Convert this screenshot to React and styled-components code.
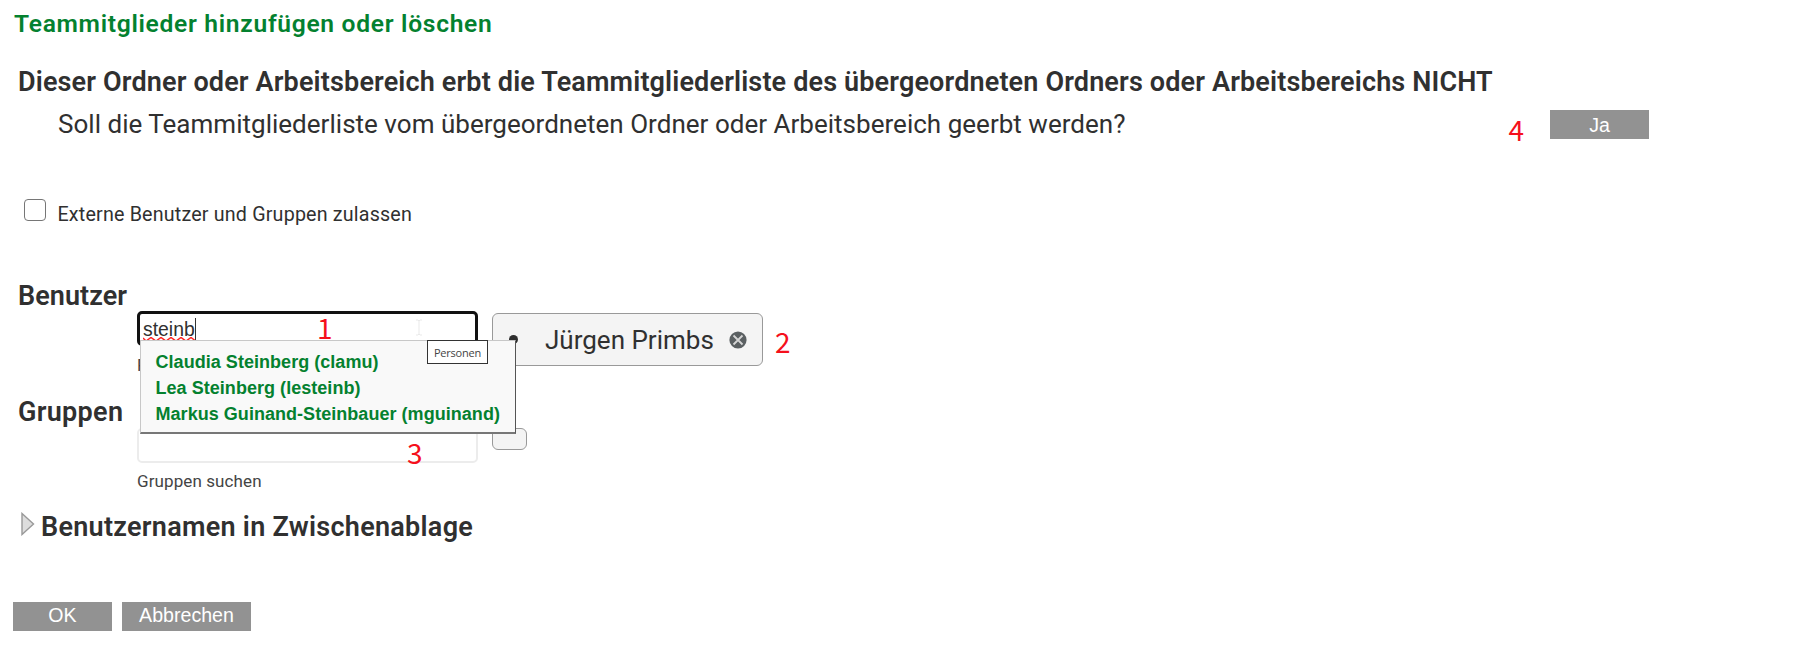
import React from "react";
import styled, { createGlobalStyle } from "styled-components";

const GlobalStyle = createGlobalStyle`
  * { box-sizing: border-box; }
  body {
    margin: 0;
    background: #fff;
    color: #303030;
    font-family: Roboto, "Liberation Sans", sans-serif;
  }
`;

const Page = styled.main`
  position: relative;
  height: 657px;
  padding: 9px 0 0 13px;
  overflow: hidden;
`;

const Title = styled.h1`
  margin: 0 0 0 1px;
  color: #04812f;
  font-size: 24.6px;
  font-weight: 600;
  line-height: 30px;
  letter-spacing: 0.7px;
  white-space: nowrap;
`;

const Heading = styled.h2`
  margin: 0;
  font-size: 27px;
  font-weight: 600;
  line-height: 30px;
  letter-spacing: ${(p) => p.$spacing || "0.15px"};
  white-space: nowrap;
`;

const Inheritance = styled.section`
  padding: 28px 0 0 5px;
`;

const QuestionRow = styled.div`
  display: flex;
  width: 1631px;
  height: 30px;
  margin-top: 12px;
  padding-left: 40px;
  justify-content: space-between;
`;

const Question = styled.p`
  margin: 0;
  font-size: 26px;
  font-weight: 370;
  line-height: 30px;
  letter-spacing: 0.02px;
  white-space: nowrap;
`;

const Actions = styled.div`
  display: flex;
  align-items: flex-start;
  gap: ${(p) => p.$gap};
  padding-top: ${(p) => p.$top || "0"};
`;

const Button = styled.button`
  width: ${(p) => p.$width};
  height: 29px;
  margin: 0;
  padding: 0 0 ${(p) => p.$lift || "0"};
  border: 0;
  background: #929292;
  color: #fff;
  font: 19.6px/26px "Liberation Sans", Arial, sans-serif;
`;

const Mark = styled.span`
  padding-top: ${(p) => p.$drop || "0"};
  color: #f5101c;
  font: 28px/30px "Noto Sans CJK SC", "Noto Sans", sans-serif;
`;

const ExternalOption = styled.label`
  display: flex;
  height: 30px;
  margin: 60px 0 0 11px;
  gap: 11.5px;
  font-size: 19.7px;
  line-height: 32px;
  letter-spacing: 0.18px;
`;

const Checkbox = styled.input`
  appearance: none;
  width: 22px;
  height: 22px;
  margin: 0;
  border: 1.5px solid #767676;
  border-radius: 4px;
  background: #fff;
`;

const Picker = styled.section`
  display: grid;
  grid-template-columns: 119px 355px 1fr;
  height: ${(p) => p.$height};
  margin-top: ${(p) => p.$top};
  padding-left: 5px;
`;

const SearchField = styled.div`
  position: relative;
  width: 341px;
  margin-top: ${(p) => p.$top};
`;

const Entry = styled.div`
  position: relative;
  height: 35px;
  padding: 3px 0 0 3px;
  border: ${(p) => (p.$active ? "3px solid #111" : "2px solid #ececec")};
  border-radius: 5px;
  background: #fff;
  font: 19.4px/24px "Liberation Sans", Arial, sans-serif;
`;

const Typed = styled.span`
  display: inline-block;
  height: 22px;
  border-right: 1px solid #333;
  line-height: 22px;
`;

const Squiggle = styled.svg`
  position: absolute;
  left: 3px;
  top: 23px;
`;

const Caption = styled.div`
  margin-top: ${(p) => p.$top};
  color: #444;
  font-size: 17px;
  line-height: 20px;
  letter-spacing: 0.1px;
`;

const Suggestions = styled.ul`
  position: absolute;
  z-index: 2;
  left: 3px;
  top: 29px;
  width: 376px;
  height: 94px;
  margin: 0;
  padding: 8px 0 0 14.5px;
  border: 1px solid #c8c8c8;
  border-right-color: #555;
  border-bottom: 2px solid #777;
  background: #f9f9f9;
  list-style: none;
`;

const Suggestion = styled.li`
  height: 26px;
  color: #04812f;
  font: bold 18px/26px "Liberation Sans", Arial, sans-serif;
  letter-spacing: 0.04px;
  white-space: nowrap;
`;

const Tooltip = styled.div`
  position: absolute;
  z-index: 3;
  left: 290px;
  top: 29px;
  width: 61px;
  height: 24px;
  border: 1.5px solid #333;
  background: #fff;
  color: #444;
  font: 11px/23px "Open Sans", sans-serif;
  letter-spacing: -0.2px;
  text-align: center;
`;

const InputMark = styled(Mark)`
  position: absolute;
  z-index: 3;
  left: ${(p) => p.$left};
  top: ${(p) => p.$top};
`;

const IBeam = styled.svg`
  position: absolute;
  left: 275px;
  top: 5px;
`;

const Chosen = styled.div`
  display: flex;
  gap: 12px;
  margin-top: ${(p) => p.$top};
`;

const ChosenList = styled.div`
  display: flex;
  align-items: center;
  width: ${(p) => p.$width};
  height: ${(p) => p.$height};
  padding-left: 16px;
  border: 1px solid #999;
  border-radius: 6px;
  background: #f4f4f4;
`;

const Bullet = styled.span`
  width: 9px;
  height: 9px;
  margin-right: 27px;
  border-radius: 50%;
  background: #2e2e2e;
`;

const Person = styled.span`
  width: 184px;
  font-size: 26px;
  font-weight: 370;
  line-height: 50px;
  white-space: nowrap;
`;

const Clipboard = styled.section`
  display: flex;
  margin-top: 23px;
  padding-left: 8px;
  gap: 6px;
`;

const Footer = styled.footer`
  margin-top: 60px;
`;

export default function App() {
  return (
    <Page>
      <GlobalStyle />
      <Title>Teammitglieder hinzufügen oder löschen</Title>
      <Inheritance>
        <Heading>
          Dieser Ordner oder Arbeitsbereich erbt die Teammitgliederliste des
          übergeordneten Ordners oder Arbeitsbereichs NICHT
        </Heading>
        <QuestionRow>
          <Question>
            Soll die Teammitgliederliste vom übergeordneten Ordner oder
            Arbeitsbereich geerbt werden?
          </Question>
          <Actions $gap="26px" $top="1px">
            <Mark $drop="4px">4</Mark>
            <Button $width="99px">Ja</Button>
          </Actions>
        </QuestionRow>
      </Inheritance>

      <ExternalOption>
        <Checkbox type="checkbox" />
        Externe Benutzer und Gruppen zulassen
      </ExternalOption>

      <Picker $top="52px" $height="116px">
        <Heading $spacing="0.05px">Benutzer</Heading>
        <SearchField $top="30px">
          <Entry $active>
            <Typed>steinb</Typed>
            <Squiggle width="53" height="5" viewBox="0 0 53 5">
              <path
                d="M0 1l3 3 5-3.5 5 3.5 5-3.5 5 3.5 5-3.5 5 3.5 5-3.5 5 3.5 5-3.5 4 3"
                fill="none"
                stroke="#f22"
                strokeWidth="1.5"
              />
            </Squiggle>
            <IBeam width="8" height="17" viewBox="0 0 8 17">
              <path d="M1 1h2l1 1 1-1h2M4 2v13M1 16h2l1-1 1 1h2" fill="none" stroke="#e9e9e9" />
            </IBeam>
          </Entry>
          <Caption $top="9px">Personen suchen</Caption>
          <InputMark $left="180px" $top="1px">1</InputMark>
          <Suggestions>
            <Suggestion>Claudia Steinberg (clamu)</Suggestion>
            <Suggestion>Lea Steinberg (lesteinb)</Suggestion>
            <Suggestion>Markus Guinand-Steinbauer (mguinand)</Suggestion>
          </Suggestions>
          <Tooltip>Personen</Tooltip>
        </SearchField>
        <Chosen $top="32px">
          <ChosenList $width="271px" $height="53px">
            <Bullet />
            <Person>Jürgen Primbs</Person>
            <svg width="18" height="18" viewBox="0 0 18 18">
              <circle cx="9" cy="9" r="8.6" fill="#5b6062" />
              <path d="M4.5 4.5l9 9M13.5 4.5l-9 9" stroke="#d5d5d5" strokeWidth="1.8" />
            </svg>
          </ChosenList>
          <Mark $drop="13px">2</Mark>
        </Chosen>
      </Picker>

      <Picker $top="0" $height="92px">
        <Heading $spacing="0.3px">Gruppen</Heading>
        <SearchField $top="31px">
          <Entry />
          <Caption $top="8px">Gruppen suchen</Caption>
          <InputMark $left="270px" $top="9px">3</InputMark>
        </SearchField>
        <Chosen $top="31px">
          <ChosenList $width="35px" $height="22px" />
        </Chosen>
      </Picker>

      <Clipboard>
        <svg width="14" height="24" viewBox="0 0 14 24">
          <path d="M1 1.5v21L12.5 12z" fill="#ddd" stroke="#999" strokeWidth="1.4" />
        </svg>
        <Heading $spacing="0.28px">Benutzernamen in Zwischenablage</Heading>
      </Clipboard>

      <Footer>
        <Actions $gap="10px">
          <Button $width="99px" $lift="3px">OK</Button>
          <Button $width="129px" $lift="3px">Abbrechen</Button>
        </Actions>
      </Footer>
    </Page>
  );
}
